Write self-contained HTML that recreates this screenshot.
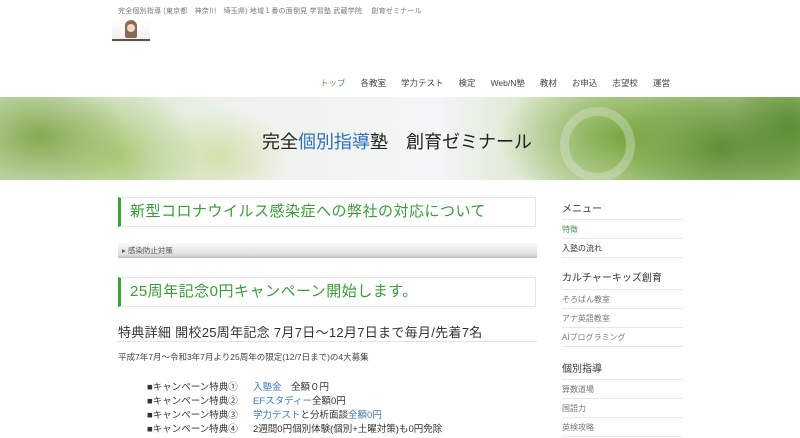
<!DOCTYPE html>
<html><head><meta charset="utf-8"><style>
*{margin:0;padding:0;box-sizing:border-box}
body{width:800px;height:438px;overflow:hidden;background:#fff;font-family:"Liberation Sans","Noto Sans CJK JP",sans-serif;color:#333;position:relative}
.a{position:absolute;white-space:nowrap}
.banner{position:absolute;left:0;top:97px;width:800px;height:83px;overflow:hidden;
background:
radial-gradient(ellipse 90px 60px at 40px 40px,rgba(120,160,60,.85),transparent),
radial-gradient(ellipse 80px 70px at 120px 60px,rgba(150,190,80,.7),transparent),
radial-gradient(ellipse 70px 50px at 220px 60px,rgba(190,210,120,.55),transparent),
radial-gradient(ellipse 120px 70px at 620px 40px,rgba(110,160,50,.85),transparent),
radial-gradient(ellipse 110px 70px at 720px 50px,rgba(80,130,40,.85),transparent),
radial-gradient(ellipse 60px 60px at 790px 30px,rgba(90,140,50,.9),transparent),
linear-gradient(90deg,#c7dbb2 0%,#eef3ee 30%,#f3f6f6 55%,#c9dcaf 75%,#9dbd74 100%);}
.side div{position:absolute;left:562px;width:121px;border-bottom:1px solid #e8e8e8;white-space:nowrap}
.h{position:absolute;left:118px;width:418px;border:1px solid #e6e6e6;border-left:3px solid #3ca53c;color:#3a9a3a;font-size:15px;padding-left:9px;letter-spacing:.5px;white-space:nowrap}
.li{position:absolute;left:147px;font-size:9.5px;color:#333;white-space:nowrap}
.li b{font-weight:normal;position:absolute;left:106px}
.bl{color:#3b7ab8}
</style></head><body>
<div class="a" style="left:118px;top:6px;font-size:7px;color:#777;letter-spacing:.2px">完全個別指導 (東京都　神奈川　埼玉県) 地域１番の面倒見 学習塾 武蔵学院　 創育ゼミナール</div>
<div class="a" style="left:112px;top:20px;width:38px;height:22px;background:linear-gradient(#fff,#eee)">
<div style="position:absolute;left:13px;top:0;width:12px;height:18px;border-radius:6px 6px 2px 2px;background:#8a6a55"></div>
<div style="position:absolute;left:15px;top:4px;width:8px;height:8px;border-radius:4px;background:#f0d6c6"></div>
<div style="position:absolute;left:0;top:19px;width:38px;height:2px;background:#555"></div></div>
<div class="a" style="top:77px;left:320px;font-size:8.5px;color:#444">
<span style="color:#5a9a5a">トップ</span><span style="margin-left:15px">各教室</span><span style="margin-left:15px">学力テスト</span><span style="margin-left:15px">検定</span><span style="margin-left:15px">Web/N塾</span><span style="margin-left:15px">教材</span><span style="margin-left:15px">お申込</span><span style="margin-left:15px">志望校</span><span style="margin-left:15px">運営</span></div>
<div class="banner">
<div style="position:absolute;left:560px;top:10px;width:75px;height:75px;border:9px solid rgba(230,235,230,.35);border-radius:50%"></div>
<div class="a" style="left:262px;top:31px;font-size:18px;color:#222">完全<span style="color:#2f6fb5">個別指導</span>塾　創育ゼミナール</div></div>
<div class="h" style="top:197px;height:30px;line-height:28px">新型コロナウイルス感染症への弊社の対応について</div>
<div class="a" style="left:118px;top:243px;width:419px;height:15px;background:linear-gradient(#fafafa,#ddd 80%,#bbb);font-size:7.5px;color:#555;line-height:15px;padding-left:4px">▸ 感染防止対策</div>
<div class="h" style="top:277px;height:30px;line-height:28px">25周年記念0円キャンペーン開始します。</div>
<div class="a" style="left:118px;top:322px;font-size:13px;color:#333;letter-spacing:.3px">特典詳細 開校25周年記念 7月7日～12月7日まで毎月/先着7名</div>
<div class="a" style="left:118px;top:341px;width:419px;border-top:1px solid #e5e5e5"></div>
<div class="a" style="left:118px;top:351px;font-size:8.5px;color:#444">平成7年7月～令和3年7月より25周年の限定(12/7日まで)の4大募集</div>
<div class="li" style="top:379px">■キャンペーン特典①<b><span class="bl">入塾金</span>　全額０円</b></div>
<div class="li" style="top:393px">■キャンペーン特典②<b><span class="bl">EFスタディー</span>全額0円</b></div>
<div class="li" style="top:407px">■キャンペーン特典③<b><span class="bl">学力テスト</span>と分析面談<span class="bl">全額0円</span></b></div>
<div class="li" style="top:421px">■キャンペーン特典④<b>2週間0円個別体験(個別+土曜対策)も0円免除</b></div>
<div class="side">
<div style="top:200px;height:20px;font-size:10px;color:#333">メニュー</div>
<div style="top:220px;height:19px;font-size:8px;color:#4a9a4a;line-height:19px">特徴</div>
<div style="top:239px;height:19px;font-size:8px;color:#333;line-height:19px">入塾の流れ</div>
<div style="top:269px;height:21px;font-size:10px;color:#333">カルチャーキッズ創育</div>
<div style="top:290px;height:19px;font-size:8px;color:#777;line-height:19px">そろばん教室</div>
<div style="top:309px;height:19px;font-size:8px;color:#777;line-height:19px">アナ英語教室</div>
<div style="top:328px;height:19px;font-size:8px;color:#777;line-height:19px">AIプログラミング</div>
<div style="top:360px;height:20px;font-size:10px;color:#333">個別指導</div>
<div style="top:380px;height:19px;font-size:8px;color:#777;line-height:19px">算数道場</div>
<div style="top:399px;height:19px;font-size:8px;color:#777;line-height:19px">国語力</div>
<div style="top:418px;height:19px;font-size:8px;color:#777;line-height:19px">英検攻略</div>
</div>
</body></html>
